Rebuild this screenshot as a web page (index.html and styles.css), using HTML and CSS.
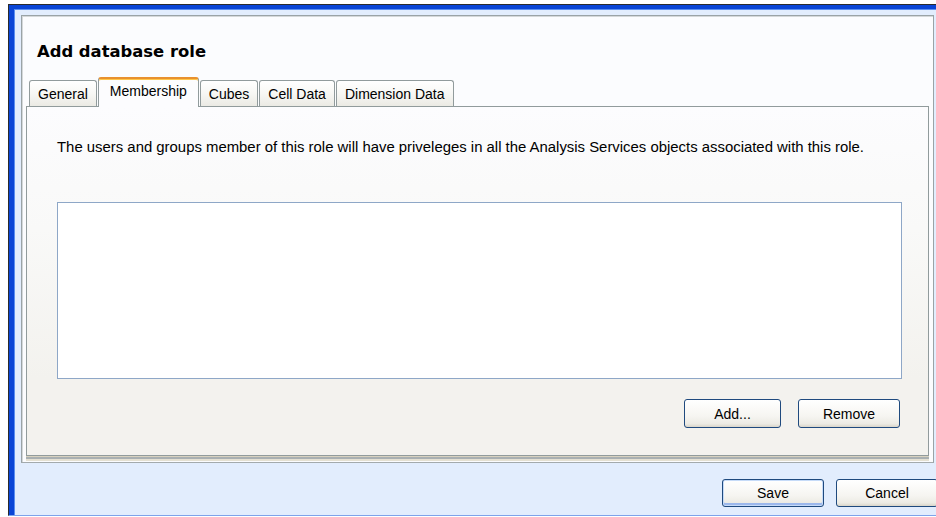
FILE: index.html
```html
<!DOCTYPE html>
<html lang="en">
<head>
<meta charset="utf-8">
<title>Add database role</title>
<link rel="stylesheet" href="styles.css">
</head>
<body>
<div class="window">
  <div class="frame">
    <div class="dialog">
      <h1 class="title">Add database role</h1>
      <div class="tabs">
        <div class="tab">General</div>
        <div class="tab tab-active">Membership</div>
        <div class="tab">Cubes</div>
        <div class="tab">Cell Data</div>
        <div class="tab">Dimension Data</div>
      </div>
      <div class="tab-page">
        <p class="intro">The users and groups member of this role will have priveleges in all the Analysis Services objects associated with this role.</p>
        <div class="member-list"></div>
        <div class="list-actions">
          <button class="btn btn-add" type="button">Add...</button>
          <button class="btn btn-remove" type="button">Remove</button>
        </div>
      </div>
    </div>
    <div class="footer">
      <button class="btn btn-footer btn-default" type="button">Save</button>
      <button class="btn btn-footer" type="button">Cancel</button>
    </div>
  </div>
</div>
</body>
</html>
```
FILE: styles.css
```css
html, body {
  margin: 0;
  padding: 0;
  background: #ffffff;
  overflow: hidden;
}

body {
  font-family: "Liberation Sans", Arial, sans-serif;
  font-size: 14px;
  color: #000;
}

/* Window chrome: dark outline, blue XP frame, pale blue client area */
.window {
  margin: 4px 0 0 8px;
  height: 512px;
  box-sizing: border-box;
  border-top: 1px solid #2b2b2b;
  border-left: 1px solid #2b2b2b;
  border-bottom: 1px solid #7ea3ea;
}

.frame {
  height: 100%;
  box-sizing: border-box;
  border-top: 4px solid #0a45d6;
  border-left: 5px solid #0a45d6;
  box-shadow: inset 1px 1px 0 #5a8ef0;
  background: #e2edfd;
  padding: 6px 0 0 7px;
  display: flex;
  flex-direction: column;
}

/* Dialog body */
.dialog {
  margin-right: 2px;
  height: 448px;
  box-sizing: border-box;
  border: 1px solid #9aa3a6;
  box-shadow: inset 1px 1px 0 #d4d8da;
  border-bottom-color: #a3aaac;
  background: #fbfcfe;
  padding: 0 4px;
  display: flex;
  flex-direction: column;
}

.title {
  margin: 0;
  padding: 26px 0 0 11px;
  font-family: "DejaVu Sans", Verdana, sans-serif;
  font-weight: bold;
  font-size: 16.4px;
  line-height: 20px;
  color: #000;
}

/* Tab strip */
.tabs {
  display: flex;
  align-items: flex-end;
  gap: 1px;
  margin-top: 15px;
  margin-bottom: -1px;
  padding-left: 3px;
}

.tab {
  box-sizing: border-box;
  height: 26px;
  margin-bottom: 1px;
  padding: 5px 8px 0;
  line-height: 17px;
  border: 1px solid #919b9c;
  border-bottom: none;
  border-radius: 3px 3px 0 0;
  background: linear-gradient(to bottom, #ffffff 0%, #f7f7f4 50%, #ebeae4 100%);
  white-space: nowrap;
}

.tab-active {
  position: relative;
  z-index: 1;
  height: 30px;
  margin-bottom: 0;
  padding: 4px 11px 0;
  border-top: 2px solid #e8912e;
  box-shadow: inset 0 1px 0 #ffc64a;
  background: #fcfcfe;
}

/* Tab page */
.tab-page {
  box-sizing: border-box;
  height: 350px;
  border: 1px solid #919b9c;
  box-shadow: 0 1px 0 #d8d2bf, 0 3px 0 #a9b0b2, 0 5px 0 #e4e0d2;
  background: linear-gradient(to bottom, #fcfcfe 0%, #f9f9f8 35%, #f3f2ee 78%, #f3f2ee 100%);
  padding: 32px 26px 0 30px;
}

.intro {
  margin: 0;
  font-size: 14.9px;
  line-height: 17px;
  white-space: nowrap;
}

.member-list {
  margin-top: 46px;
  height: 177px;
  box-sizing: border-box;
  border: 1px solid #8ea7c7;
  background: #ffffff;
}

.list-actions {
  margin-top: 20px;
  margin-right: 2px;
  display: flex;
  justify-content: flex-end;
  gap: 17px;
}

/* XP style push buttons */
.btn {
  box-sizing: border-box;
  height: 29px;
  padding: 0;
  font-family: "Liberation Sans", Arial, sans-serif;
  font-size: 14px;
  color: #000;
  border: 1px solid #1f4a7e;
  border-radius: 3px;
  background: linear-gradient(to bottom, #ffffff 0%, #f6f5f1 60%, #ecebe4 88%, #d9d5c9 100%);
}

.btn-add {
  width: 97px;
}

.btn-remove {
  width: 102px;
}

.footer {
  margin-top: 16px;
  display: flex;
  justify-content: flex-end;
  gap: 12px;
  margin-right: -2px;
}

.btn-footer {
  width: 102px;
  height: 28px;
}

.btn-default {
  box-shadow: inset 0 0 0 1px #c6dbf8, inset 0 -2px 0 1px #9cb8ec;
}
```
